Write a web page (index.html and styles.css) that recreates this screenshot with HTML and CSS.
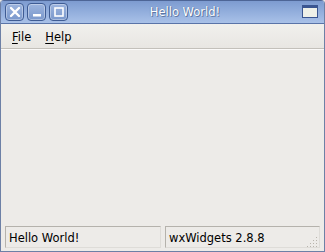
FILE: index.html
```html
<!DOCTYPE html>
<html lang="en">
<head>
  <meta charset="UTF-8">
  <title>Hello World!</title>
  <link rel="stylesheet" href="styles.css">
</head>
<body>
  <div class="window">
    <div class="titlebar">
      <div class="title-buttons">
        <div class="tb-button">
          <svg width="12" height="12" viewBox="0 0 12 12"><path d="M2 2 L10 10 M10 2 L2 10" stroke="#fff" stroke-width="2.4" stroke-linecap="round"/></svg>
        </div>
        <div class="tb-button">
          <svg width="12" height="12" viewBox="0 0 12 12"><rect x="2" y="8" width="8" height="2.5" fill="#fff"/></svg>
        </div>
        <div class="tb-button">
          <svg width="12" height="12" viewBox="0 0 12 12"><rect x="2" y="2" width="8" height="8" fill="none" stroke="#fff" stroke-width="1.6"/></svg>
        </div>
      </div>
      <div class="title">Hello World!</div>
      <div class="title-right">
        <svg width="16" height="13" viewBox="0 0 16 13"><rect x="0.5" y="0.5" width="15" height="12" fill="#eef0e8" stroke="#3a5590"/><rect x="0" y="0" width="16" height="3" fill="#3a5590"/></svg>
      </div>
    </div>

    <div class="menubar">
      <span class="menu-item"><u>F</u>ile</span>
      <span class="menu-item"><u>H</u>elp</span>
    </div>

    <div class="client"></div>

    <div class="statusbar">
      <div class="status-field first">Hello World!</div>
      <div class="status-field second">wxWidgets 2.8.8</div>
      <div class="grip">
        <svg width="12" height="12" viewBox="0 0 12 12">
          <g fill="#b8b4ac">
            <rect x="9" y="1" width="1" height="1"/>
            <rect x="6" y="4" width="1" height="1"/><rect x="9" y="4" width="1" height="1"/>
            <rect x="3" y="7" width="1" height="1"/><rect x="6" y="7" width="1" height="1"/><rect x="9" y="7" width="1" height="1"/>
            <rect x="0" y="10" width="1" height="1"/><rect x="3" y="10" width="1" height="1"/><rect x="6" y="10" width="1" height="1"/><rect x="9" y="10" width="1" height="1"/>
          </g>
        </svg>
      </div>
    </div>
  </div>
</body>
</html>
```

FILE: styles.css
```css
:root {
  --frame-dark: #4d6596;
  --title-top: #8aa7d8;
  --title-bottom: #a9c1e8;
  --bg: #edebe8;
  --text: #000000;
}

html, body {
  margin: 0;
  padding: 0;
  background: var(--bg);
}

body {
  font-family: 'DejaVu Sans', sans-serif;
  font-size: 11px;
  color: var(--text);
}

.window {
  width: 325px;
  height: 252px;
  box-sizing: border-box;
  display: flex;
  flex-direction: column;
  border-left: 1px solid #6d80a6;
  border-right: 1px solid #6d80a6;
  border-bottom: 1px solid #6d80a6;
  border-radius: 4px 4px 0 0;
  overflow: hidden;
  background: var(--bg);
}

.titlebar {
  height: 24px;
  display: flex;
  align-items: center;
  padding: 0 6px 0 4px;
  background: linear-gradient(to bottom, #7d9bd0 0%, var(--title-top) 30%, var(--title-bottom) 100%);
  border-top: 1px solid var(--frame-dark);
  border-bottom: 1px solid #5a74a8;
  box-sizing: border-box;
}

.title-buttons {
  display: flex;
  gap: 3px;
}

.tb-button {
  width: 19px;
  height: 18px;
  box-sizing: border-box;
  border: 1px solid #3f5c94;
  border-radius: 4px;
  background: linear-gradient(to bottom, #9cb4de, #7a98cc);
  box-shadow: inset 0 0 0 1px rgba(255, 255, 255, 0.35);
  display: flex;
  align-items: center;
  justify-content: center;
}

.title {
  flex: 1;
  text-align: center;
  color: #ffffff;
  font-size: 11.5px;
  text-shadow: 0 0 1px #45608f, 1px 1px 0 rgba(60, 85, 130, 0.6);
}

.title-right {
  display: flex;
  align-items: center;
  margin-top: -1px;
}

.menubar {
  height: 25px;
  display: flex;
  align-items: center;
  gap: 14px;
  padding: 1px 0 0 11px;
  box-sizing: border-box;
  font-size: 11.5px;
  border-bottom: 1px solid #c3c0ba;
  box-shadow: 0 1px 0 #fbfaf9;
  background: linear-gradient(to bottom, #f1f0ed, #e8e6e2);
}

.menu-item u {
  text-decoration-thickness: 1px;
  text-underline-offset: 2px;
}

.client {
  flex: 1;
}

.statusbar {
  height: 24px;
  display: flex;
  align-items: center;
  padding: 0 4px 2px 4px;
  gap: 4px;
  position: relative;
}

.status-field {
  height: 22px;
  box-sizing: border-box;
  border: 1px solid #b5b2ac;
  border-right-color: #dedcd8;
  border-bottom-color: #dedcd8;
  padding: 2px 3px 0 3px;
  display: flex;
  align-items: center;
  font-size: 11.5px;
}

.status-field.first {
  width: 156px;
}

.status-field.second {
  flex: 1;
}

.grip {
  position: absolute;
  right: 5px;
  bottom: 3px;
  line-height: 0;
}
```
